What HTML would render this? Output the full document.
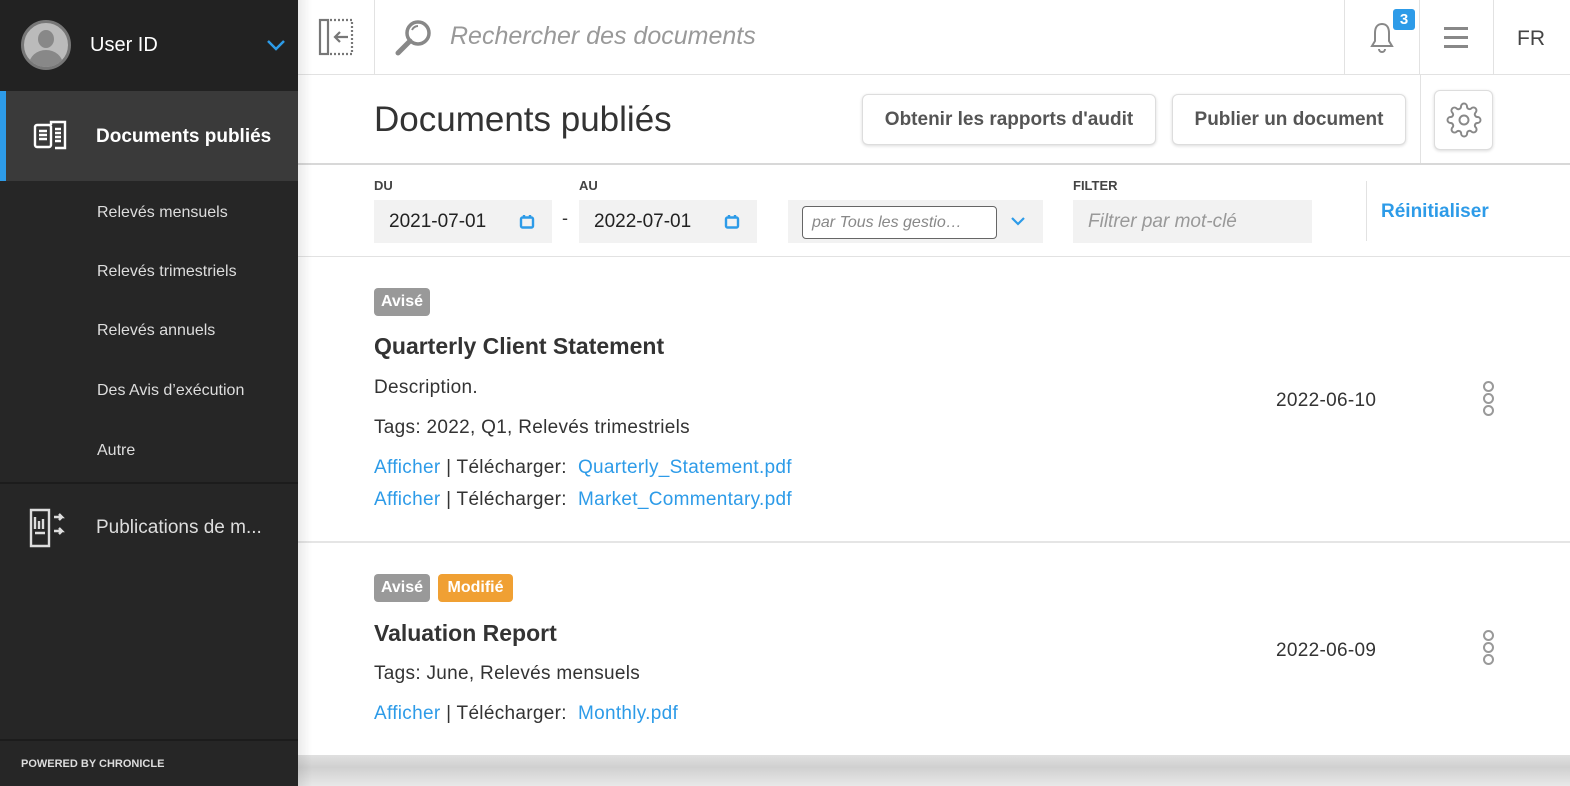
<!DOCTYPE html>
<html><head><meta charset="utf-8"><style>
*{box-sizing:border-box;margin:0;padding:0}
body{width:1570px;height:786px;overflow:hidden;font-family:"Liberation Sans",sans-serif;background:#fff;position:relative;color:#333}
.a{position:absolute}
.sb{left:0;top:0;width:298px;height:786px;background:#262626;color:#ddd}
.sub{position:absolute;left:97px;font-size:16px;color:#ddd}
.blue{color:#2d9be8}
.lbl{font-size:13px;font-weight:bold;color:#444}
.inp{background:#f2f2f2;height:43px;top:200px}
.btn{border:1px solid #ddd;border-radius:6px;box-shadow:0 1px 3px rgba(0,0,0,.15);background:#fff;font-weight:bold;font-size:19px;color:#555;display:flex;align-items:center;justify-content:center}
.badge{height:28px;border-radius:4px;color:#fff;font-weight:bold;font-size:16px;display:flex;align-items:center;justify-content:center}
.t{font-size:19px;color:#333;letter-spacing:0.3px}
.dots span{display:block;width:11px;height:11px;border:2px solid #999;border-radius:50%;margin-bottom:1px}
</style></head><body>
<div class="a sb">
 <div class="a" style="left:0;top:0;width:298px;height:91px;background:#222"></div>
 <div class="a" style="left:21px;top:20px;width:50px;height:50px;border-radius:50%;background:#bbb;border:3px solid #777;overflow:hidden">
  <div class="a" style="left:14px;top:7px;width:16px;height:18px;border-radius:50%;background:#888"></div>
  <div class="a" style="left:5px;top:27px;width:34px;height:30px;border-radius:50% 50% 0 0;background:#888"></div>
 </div>
 <div class="a" style="left:90px;top:34px;font-size:20px;color:#fff">User ID</div>
 <svg class="a" style="left:266px;top:38px" width="20" height="14"><path d="M2 3l8 8 8-8" stroke="#2d9be8" stroke-width="2.5" fill="none"/></svg>
 <div class="a" style="left:0;top:91px;width:298px;height:90px;background:#3a3a3a"></div>
 <div class="a" style="left:0;top:91px;width:6px;height:90px;background:#2d9be8"></div>
 <svg class="a" style="left:33px;top:119px" width="36" height="36" fill="none" stroke="#fff" stroke-width="2.4"><rect x="2" y="6" width="16" height="22" rx="2"/><path d="M18 6V3h14v26H22"/><path d="M6 12h8M6 16h8M6 20h8M22 10h6M22 14h6M22 18h6M22 22h6"/></svg>
 <div class="a" style="left:96px;top:126px;font-size:19px;font-weight:bold;color:#fff">Documents publiés</div>
 <div class="sub" style="top:204px">Relevés mensuels</div>
 <div class="sub" style="top:263px">Relevés trimestriels</div>
 <div class="sub" style="top:322px">Relevés annuels</div>
 <div class="sub" style="top:382px">Des Avis d’exécution</div>
 <div class="sub" style="top:442px">Autre</div>
 <div class="a" style="left:0;top:482px;width:298px;height:2px;background:#1c1c1c"></div>
 <svg class="a" style="left:28px;top:507px" width="46" height="42" fill="none" stroke="#ddd" stroke-width="2.4"><path d="M3 3h18v36H3z"/><path d="M7 10v12M11 14v8M15 12v10M7 26h10"/><path d="M26 10h8l-3-3M34 10l-3 3M26 24h8l-3-3M34 24l-3 3"/></svg>
 <div class="a" style="left:96px;top:517px;font-size:19px;color:#ddd">Publications de m...</div>
 <div class="a" style="left:0;top:739px;width:298px;height:2px;background:#1c1c1c"></div>
 <div class="a" style="left:21px;top:758px;font-size:11px;font-weight:bold;color:#ddd">POWERED BY CHRONICLE</div>
</div>
<div class="a" style="left:298px;top:74px;width:1272px;height:1px;background:#e2e2e2"></div>
<svg class="a" style="left:318px;top:18px" width="38" height="38" fill="none" stroke="#777" stroke-width="2.2"><rect x="2" y="2" width="8" height="34"/><path d="M12 2h22v34H12" stroke-dasharray="2 2"/><path d="M30 19H17M22 14l-5 5 5 5"/></svg>
<div class="a" style="left:374px;top:0;width:1px;height:74px;background:#e2e2e2"></div>
<svg class="a" style="left:393px;top:18px" width="40" height="38" fill="none" stroke="#888" stroke-width="3.5"><circle cx="25" cy="15" r="11"/><path d="M17 23L5 35" stroke-width="5" stroke-linecap="round"/><path d="M19 12a7 7 0 0 1 6-4" stroke-width="2"/></svg>
<div class="a" style="left:450px;top:22px;font-size:25px;font-style:italic;color:#999">Rechercher des documents</div>
<div class="a" style="left:1344px;top:0;width:1px;height:74px;background:#e2e2e2"></div>
<div class="a" style="left:1419px;top:0;width:1px;height:74px;background:#e2e2e2"></div>
<div class="a" style="left:1493px;top:0;width:1px;height:74px;background:#e2e2e2"></div>
<svg class="a" style="left:1368px;top:20px" width="28" height="34" fill="none" stroke="#888" stroke-width="2"><path d="M14 4c-5 0-7 4-7 9v8l-3 5h20l-3-5v-8c0-5-2-9-7-9z"/><path d="M11 29a3 3 0 0 0 6 0"/></svg>
<div class="a" style="left:1393px;top:9px;width:22px;height:21px;background:#2d9be8;border-radius:3px;color:#fff;font-size:15px;font-weight:bold;text-align:center;line-height:21px">3</div>
<div class="a" style="left:1444px;top:27px;width:24px;height:2.5px;background:#888;box-shadow:0 9px 0 #888,0 18px 0 #888"></div>
<div class="a" style="left:1517px;top:27px;font-size:21px;color:#444">FR</div>
<div class="a" style="left:374px;top:100px;font-size:35px;color:#333">Documents publiés</div>
<div class="a btn" style="left:862px;top:94px;width:294px;height:51px">Obtenir les rapports d'audit</div>
<div class="a btn" style="left:1172px;top:94px;width:234px;height:51px">Publier un document</div>
<div class="a" style="left:1420px;top:75px;width:1px;height:89px;background:#e2e2e2"></div>
<div class="a btn" style="left:1434px;top:90px;width:59px;height:60px">
<svg width="36" height="36" viewBox="0 0 24 24" fill="none" stroke="#888" stroke-width="1.3"><circle cx="12" cy="12" r="3"/><path d="M19.4 15a1.65 1.65 0 0 0 .33 1.82l.06.06a2 2 0 1 1-2.830 2.830l-.06-.06a1.65 1.65 0 0 0-1.82-.33 1.65 1.65 0 0 0-1 1.51V21a2 2 0 1 1-4 0v-.09A1.65 1.65 0 0 0 9 19.4a1.65 1.65 0 0 0-1.82.33l-.06.06a2 2 0 1 1-2.83-2.83l.06-.06A1.65 1.65 0 0 0 4.6 15a1.65 1.65 0 0 0-1.51-1H3a2 2 0 1 1 0-4h.09A1.65 1.65 0 0 0 4.6 9a1.65 1.65 0 0 0-.33-1.82l-.06-.06a2 2 0 1 1 2.83-2.83l.06.06A1.65 1.65 0 0 0 9 4.6a1.65 1.65 0 0 0 1-1.51V3a2 2 0 1 1 4 0v.09a1.65 1.65 0 0 0 1 1.51 1.65 1.65 0 0 0 1.82-.33l.06-.06a2 2 0 1 1 2.83 2.83l-.06.06A1.65 1.65 0 0 0 19.4 9a1.65 1.65 0 0 0 1.51 1H21a2 2 0 1 1 0 4h-.09a1.65 1.65 0 0 0-1.51 1z"/></svg></div>
<div class="a" style="left:298px;top:163px;width:1272px;height:2px;background:#d8d8d8"></div>
<div class="a lbl" style="left:374px;top:178px">DU</div>
<div class="a lbl" style="left:579px;top:178px">AU</div>
<div class="a lbl" style="left:1073px;top:178px">FILTER</div>
<div class="a inp" style="left:374px;width:178px"><span class="a" style="left:15px;top:11px;font-size:19px;color:#222">2021-07-01</span>
<svg class="a" style="left:145px;top:14px" width="16" height="15"><rect x="2" y="3.5" width="12" height="10" rx="1.5" fill="none" stroke="#2d9be8" stroke-width="2.4"/><path d="M5 1v3.5M11 1v3.5" stroke="#2d9be8" stroke-width="2.4"/></svg></div>
<div class="a" style="left:562px;top:208px;font-size:18px">-</div>
<div class="a inp" style="left:579px;width:178px"><span class="a" style="left:15px;top:11px;font-size:19px;color:#222">2022-07-01</span>
<svg class="a" style="left:145px;top:14px" width="16" height="15"><rect x="2" y="3.5" width="12" height="10" rx="1.5" fill="none" stroke="#2d9be8" stroke-width="2.4"/><path d="M5 1v3.5M11 1v3.5" stroke="#2d9be8" stroke-width="2.4"/></svg></div>
<div class="a inp" style="left:788px;width:255px">
 <div class="a" style="left:14px;top:6px;width:195px;height:33px;background:#fff;border:1px solid #666;border-radius:4px;font-size:16px;font-style:italic;color:#888;padding:7px 0 0 9px;white-space:nowrap;overflow:hidden">par Tous les gestio…</div>
 <svg class="a" style="left:222px;top:16px" width="16" height="12"><path d="M2 2l6 6 6-6" stroke="#2d9be8" stroke-width="2.2" fill="none"/></svg>
</div>
<div class="a inp" style="left:1073px;width:239px"><span class="a" style="left:15px;top:11px;font-size:19px;font-style:italic;color:#999">Filtrer par mot-clé</span></div>
<div class="a" style="left:1366px;top:181px;width:1px;height:60px;background:#e2e2e2"></div>
<div class="a blue" style="left:1381px;top:201px;font-size:19px;font-weight:bold">Réinitialiser</div>
<div class="a" style="left:298px;top:256px;width:1272px;height:1px;background:#e2e2e2"></div>
<div class="a badge" style="left:374px;top:288px;width:56px;background:#999">Avisé</div>
<div class="a" style="left:374px;top:333px;font-size:23px;font-weight:bold;color:#333">Quarterly Client Statement</div>
<div class="a t" style="left:374px;top:377px">Description.</div>
<div class="a t" style="left:374px;top:417px">Tags: 2022, Q1, Relevés trimestriels</div>
<div class="a t" style="left:374px;top:457px"><span class="blue">Afficher</span> | Télécharger:&nbsp; <span class="blue">Quarterly_Statement.pdf</span></div>
<div class="a t" style="left:374px;top:489px"><span class="blue">Afficher</span> | Télécharger:&nbsp; <span class="blue">Market_Commentary.pdf</span></div>
<div class="a t" style="left:1276px;top:390px">2022-06-10</div>
<div class="a dots" style="left:1483px;top:381px"><span></span><span></span><span></span></div>
<div class="a" style="left:298px;top:541px;width:1272px;height:2px;background:#e5e5e5"></div>
<div class="a badge" style="left:374px;top:574px;width:56px;background:#999">Avisé</div>
<div class="a badge" style="left:438px;top:574px;width:75px;background:#f0a033">Modifié</div>
<div class="a" style="left:374px;top:620px;font-size:23px;font-weight:bold;color:#333">Valuation Report</div>
<div class="a t" style="left:374px;top:663px">Tags: June, Relevés mensuels</div>
<div class="a t" style="left:374px;top:703px"><span class="blue">Afficher</span> | Télécharger:&nbsp; <span class="blue">Monthly.pdf</span></div>
<div class="a t" style="left:1276px;top:640px">2022-06-09</div>
<div class="a dots" style="left:1483px;top:630px"><span></span><span></span><span></span></div>
<div class="a" style="left:298px;top:755px;width:1272px;height:31px;background:linear-gradient(#e0e0e0,#d0d0d0 40%,#e8e8e8)"></div>
<div class="a" style="left:298px;top:0;width:14px;height:786px;background:linear-gradient(90deg,rgba(0,0,0,.08),rgba(0,0,0,0))"></div>
</body></html>
